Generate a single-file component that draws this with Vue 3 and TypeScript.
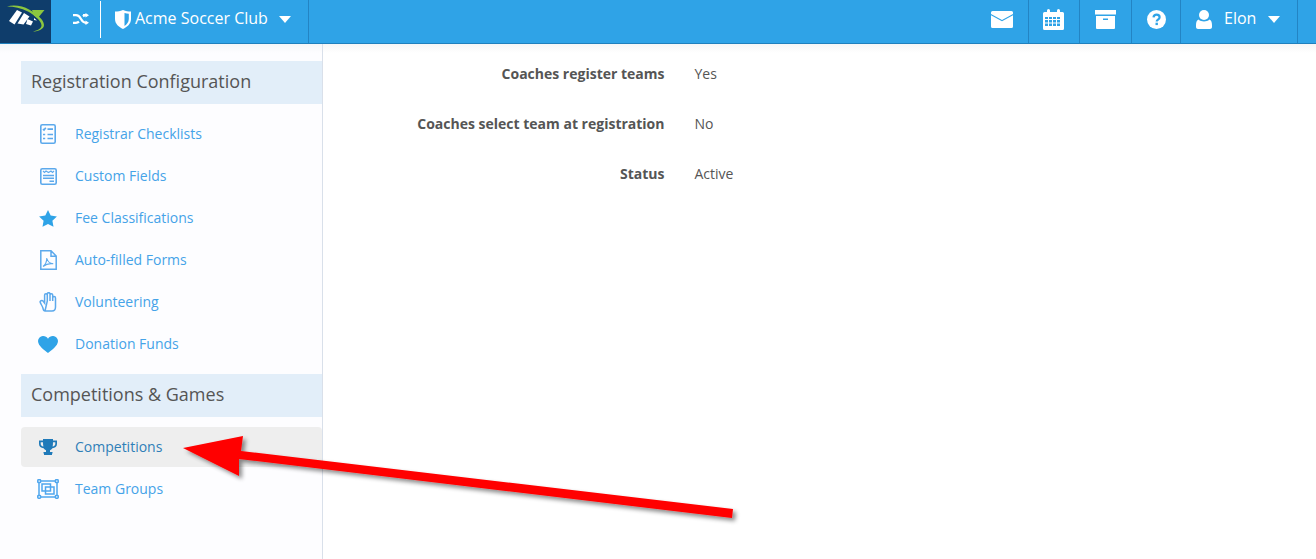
<script setup lang="ts">
interface Item { label: string; icon: string; active?: boolean }
const config: Item[] = [
  { label: 'Registrar Checklists', icon: 'check' },
  { label: 'Custom Fields', icon: 'fields' },
  { label: 'Fee Classifications', icon: 'star' },
  { label: 'Auto-filled Forms', icon: 'pdf' },
  { label: 'Volunteering', icon: 'hand' },
  { label: 'Donation Funds', icon: 'heart' },
]
const games: Item[] = [
  { label: 'Competitions', icon: 'trophy', active: true },
  { label: 'Team Groups', icon: 'groups' },
]
const details = [
  { k: 'Coaches register teams', v: 'Yes' },
  { k: 'Coaches select team at registration', v: 'No' },
  { k: 'Status', v: 'Active' },
]
</script>

<template>
  <div class="page">
    <header class="top">
      <div class="logo">
        <svg width="51" height="43" viewBox="0 0 51 43">
          <path d="M7 6.500C14 4.500 23 6 29 9.500C36 13.500 44 19.500 44 25C44 29 38.500 31.500 33 31.500C37.500 30.500 41.500 28.500 41.500 25.500C41.500 21 35 15.500 28 11.500C21 8 14 6.500 7 6.500Z" fill="#8cc63f" />
          <path d="M32 10H44.500L37.500 18.500L34 15.500Z" fill="#8cc63f" />
          <path d="M9 21L17 10L22 12.500L14.500 24.500Z" fill="#fff" />
          <path d="M17.500 23.500L24 13L29.500 16.500L23.500 24.500Z" fill="#fff" />
          <path d="M27.500 19L33 21.500L31 25.500L26 24Z" fill="#fff" />
          <path d="M34 18L37 20.500L34 20Z" fill="#fff" />
        </svg>
      </div>
      <div class="shuffle">
        <svg width="16" height="12" viewBox="0 0 16 12">
          <path d="M0 2.200h3c2.800 0 3.900 1.800 5 3.800s2.200 3.800 5 3.800M0 9.800h3c1.300 0 2.200-.4 3-1.100M13 2.200c-1.300 0-2.200.4-3 1.100M10 2.200h3" fill="none" stroke="#fff" stroke-width="2.200" />
          <path d="M12.500 0 16 2.200 12.500 4.400ZM12.500 7.600 16 9.800 12.500 12Z" fill="#fff" />
        </svg>
      </div>
      <div class="club">
        <svg width="16" height="19" viewBox="0 0 16 19">
          <path d="M0 1.500C3 1.500 5 1 8 0C11 1 13 1.500 16 1.500V9C16 14 12 17 8 19C4 17 0 14 0 9Z" fill="#fff" />
          <path d="M9.500 3C11 3.400 12.400 3.600 13.800 3.700V9C13.800 12 11.800 14.500 9.500 16Z" fill="#2fa3e7" />
        </svg>
        <span class="club-name">Acme Soccer Club</span>
        <i class="caret"></i>
      </div>
      <div class="spacer"></div>
      <div class="tool mail">
        <svg width="22" height="17" viewBox="0 0 22 17">
          <path d="M1.500 0h19A1.500 1.500 0 0 1 22 1.500V3l-11 6L0 3V1.500A1.500 1.500 0 0 1 1.500 0Z" fill="#fff" />
          <path d="M0 4.200l11 6 11-6v11.300a1.500 1.500 0 0 1-1.500 1.500h-19A1.500 1.500 0 0 1 0 15.500Z" fill="#fff" />
        </svg>
      </div>
      <div class="tool cal">
        <svg width="21" height="21" viewBox="0 0 21 21">
          <path fill-rule="evenodd" fill="#fff" d="M1.500 3H4V1.500a1.500 1.500 0 0 1 3 0V3h7V1.500a1.500 1.500 0 0 1 3 0V3h2.500A1.500 1.500 0 0 1 21 4.500v15a1.500 1.500 0 0 1-1.500 1.500h-18A1.500 1.500 0 0 1 0 19.500v-15A1.500 1.500 0 0 1 1.500 3ZM2 8v2h3V8Zm4 0v2h3V8Zm4 0v2h3V8Zm4 0v2h3V8ZM2 11v2.500h3V11Zm4 0v2.500h3V11Zm4 0v2.500h3V11Zm4 0v2.500h3V11ZM2 14.500V17h3v-2.500Zm4 0V17h3v-2.500Zm4 0V17h3v-2.500Zm4 0V17h3v-2.500Z" />
        </svg>
      </div>
      <div class="tool box">
        <svg width="21" height="19" viewBox="0 0 21 19">
          <path fill-rule="evenodd" fill="#fff" d="M0 0h21v4.500H0ZM1 6h19v12a1 1 0 0 1-1 1H2a1 1 0 0 1-1-1Zm7 2.500v1.500h5V8.500Z" />
        </svg>
      </div>
      <div class="tool help">
        <svg width="19" height="19" viewBox="0 0 19 19">
          <circle cx="9.500" cy="9.500" r="9.500" fill="#fff" />
          <path d="M6.500 7.300C6.700 5.600 8 4.700 9.600 4.700c1.700 0 3 1 3 2.600 0 2.300-2.900 2.400-2.900 4.200" fill="none" stroke="#2fa3e7" stroke-width="2.200" />
          <rect x="8.500" y="12.700" width="2.400" height="2.400" fill="#2fa3e7" />
        </svg>
      </div>
      <div class="tool user">
        <svg width="16" height="19" viewBox="0 0 16 19">
          <circle cx="8" cy="5" r="5" fill="#fff" />
          <path d="M2.500 9.500C4 11 6 11.400 8 11.400s4-.4 5.500-1.900C15 10 16 12 16 15v2c0 1.200-.9 2-2 2H2c-1.100 0-2-.8-2-2v-2c0-3 1-5 2.500-5.500Z" fill="#fff" />
        </svg>
        <span class="user-name">Elon</span>
        <i class="caret"></i>
      </div>
      <div class="tail"></div>
    </header>

    <div class="body">
      <aside class="side">
        <h2 class="sect">Registration Configuration</h2>
        <ul class="list">
          <li v-for="it in config" :key="it.label" class="row">
            <span class="ico">
              <svg v-if="it.icon === 'check'" width="16" height="20" viewBox="0 0 16 20" fill="none" stroke="#5ca9ec" stroke-width="1.600">
                <rect x=".8" y=".8" width="14.400" height="18.400" rx="1.500" />
                <path d="M3 5l1 1 1.800-2.200M3 10.500h2.200M3 14.500h2.200M7.500 5.200h5.500M7.500 10.500h5.500M7.500 14.500h5.500" stroke-width="1.700" />
              </svg>
              <svg v-else-if="it.icon === 'fields'" width="17" height="17" viewBox="0 0 17 17" fill="none" stroke="#5ca9ec" stroke-width="1.600">
                <rect x=".8" y=".8" width="15.400" height="15.400" rx="1.500" />
                <path d="M3 3l1.500 1.500L6 3l2.500 1.500L11 3l1.500 1.500L14 3" stroke-width="1.100" />
                <path d="M3 7.500h11M3 10.300h11M9.500 13.200H14" stroke-width="1.500" />
              </svg>
              <svg v-else-if="it.icon === 'star'" width="18" height="17" viewBox="0 0 18 17">
                <path d="M9 0l2.700 5.600 6.200.8-4.500 4.300 1.100 6.100L9 13.900l-5.500 2.900 1.100-6.100L.1 6.400l6.200-.8Z" fill="#2fa3e7" />
              </svg>
              <svg v-else-if="it.icon === 'pdf'" width="17" height="20" viewBox="0 0 17 20" fill="none" stroke="#5ca9ec" stroke-width="1.500">
                <path d="M.8.800h10.200l5.200 5.200v13.200H.8ZM11 .800v5.500h5.200" />
                <path d="M3 16.500c2.200-1.700 3.800-5.300 3.800-8.500.5 3.200 2.800 5.300 6.500 5.800-3.300-.5-7.600.5-10.300 2.700Z" stroke-width="1.100" />
              </svg>
              <svg v-else-if="it.icon === 'hand'" width="18" height="20" viewBox="0 0 18 20" fill="none" stroke="#5ca9ec" stroke-width="1.500">
                <path d="M6 19h7c2 0 3.500-1.500 3.500-4V6a1.300 1.300 0 0 0-2.800 0M13.700 9V3a1.300 1.300 0 0 0-2.700 0M11 9V2a1.300 1.300 0 0 0-2.700 0v7M8.300 9V3a1.300 1.300 0 0 0-2.700 0v8L4 9C3 8 .6 9 1.200 10.300c.7 2 2.300 4 2.800 6 .2 1 .8 2.700 2 2.700Z" />
              </svg>
              <svg v-else-if="it.icon === 'heart'" width="20" height="17" viewBox="0 0 20 17">
                <path d="M10 17C7 14.500 0 10 0 5a5 5 0 0 1 5.200-5C7.200 0 9 1 10 2.800 11 1 12.800 0 14.800 0A5 5 0 0 1 20 5c0 5-7 9.500-10 12Z" fill="#2fa3e7" />
              </svg>
            </span>
            <span class="lbl">{{ it.label }}</span>
          </li>
        </ul>
        <h2 class="sect">Competitions &amp; Games</h2>
        <ul class="list games">
          <li v-for="it in games" :key="it.label" class="row" :class="{ active: it.active }">
            <span class="ico">
              <svg v-if="it.icon === 'trophy'" width="18" height="16" viewBox="0 0 18 16">
                <path fill-rule="evenodd" fill="#1f7ab9" d="M4 0h10v1.500h4V5c0 2.500-2 4-4.600 4.300-.7 1-1.500 1.600-2.400 2V13h2.500v1.500H13V16H5v-1.500h-.5V13H7v-1.700c-.9-.4-1.700-1-2.400-2C2 9 0 7.500 0 5V1.500h4ZM1.700 3.200V5c0 1.200.9 2.200 2.700 2.500-.3-1.100-.4-2.600-.4-4.300Zm14.600 0H14c0 1.700-.1 3.200-.4 4.300 1.800-.3 2.700-1.300 2.700-2.500Z" />
              </svg>
              <svg v-else width="22" height="20" viewBox="0 0 22 20" fill="none" stroke="#4fa6ee" stroke-width="1.500">
                <rect x="2" y="2" width="18" height="16" />
                <rect x="5" y="5" width="8.500" height="7" />
                <rect x="8.500" y="8" width="8.500" height="7" />
                <g fill="#fff"><rect x=".8" y=".8" width="2.800" height="2.800" rx=".7" /><rect x="18.400" y=".8" width="2.800" height="2.800" rx=".7" /><rect x=".8" y="16.400" width="2.800" height="2.800" rx=".7" /><rect x="18.400" y="16.400" width="2.800" height="2.800" rx=".7" /></g>
              </svg>
            </span>
            <span class="lbl">{{ it.label }}</span>
          </li>
        </ul>
      </aside>

      <main class="main">
        <dl class="facts">
          <div v-for="d in details" :key="d.k" class="fact">
            <dt>{{ d.k }}</dt>
            <dd>{{ d.v }}</dd>
          </div>
        </dl>
      </main>
    </div>

    <svg class="arrow" width="1316" height="559" viewBox="0 0 1316 559">
      <defs>
        <filter id="arrow-shadow" x="-5%" y="-20%" width="110%" height="140%">
          <feDropShadow dx="3" dy="3" stdDeviation="2" flood-color="#000" flood-opacity=".45" />
        </filter>
      </defs>
      <polygon points="183,448 243,436 241,451 733,509 732,518 239,459 239,476" fill="#ff0000" filter="url(#arrow-shadow)" />
    </svg>
  </div>
</template>

<style>
html, body { margin: 0; background: #fff; }
</style>

<style scoped>
.page {
  position: relative;
  width: 1316px;
  height: 559px;
  overflow: hidden;
  font-family: "Open Sans", "Noto Sans", sans-serif;
  color: #555;
}
.top {
  display: flex;
  align-items: stretch;
  height: 43px;
  background: #2fa3e7;
  border-bottom: 1px solid #1f80bd;
  color: #fff;
}
.logo {
  width: 51px;
  background: #0f3d6b;
  flex: none;
}
.logo svg { display: block; }
.shuffle {
  width: 50px;
  flex: none;
  display: flex;
  align-items: center;
  justify-content: center;
  padding: 0 1px 5px 11px;
  box-sizing: border-box;
  position: relative;
}
.shuffle::after {
  content: "";
  position: absolute;
  right: 0;
  top: 1px;
  height: 37px;
  width: 1px;
  background: #fff;
}
.club {
  display: flex;
  align-items: center;
  width: 208px;
  box-sizing: border-box;
  padding: 0 0 5px 14px;
  border-right: 1px solid #2384c4;
  font-size: 16px;
}
.club-name { margin: -2px 0 0 4px; }
.caret {
  width: 0;
  height: 0;
  border-left: 6.500px solid transparent;
  border-right: 6.500px solid transparent;
  border-top: 7px solid #fff;
  margin-left: 11px;
  margin-top: 1px;
}
.spacer { flex: 1; }
.tool {
  display: flex;
  align-items: center;
  justify-content: center;
  box-sizing: border-box;
  border-right: 1px solid #2384c4;
  padding-bottom: 5px;
  flex: none;
}
.mail { width: 53px; }
.cal { width: 51px; padding-right: 2px; }
.box { width: 52px; }
.help { width: 49px; }
.user { width: 117px; justify-content: flex-start; padding-left: 15px; font-size: 16px; }
.user-name { margin: -2px 0 0 12px; }
.user .caret { margin-left: 12px; }
.tail { width: 18px; flex: none; }

.body { display: flex; height: 515px; }
.side {
  width: 323px;
  box-sizing: border-box;
  flex: none;
  padding: 17px 0 0 21px;
  background: linear-gradient(#f5f6f8, #fdfdff 9px);
  border-right: 1px solid #d9e0ea;
}
.sect {
  margin: 0;
  height: 43px;
  line-height: 41px;
  padding-left: 10px;
  background: #e2eef9;
  font-size: 18px;
  font-weight: 400;
  color: #555;
}
.list {
  list-style: none;
  margin: 0;
  padding: 9px 0 9px;
}
.games { padding-top: 10px; }
.row {
  display: flex;
  align-items: center;
  height: 42px;
  font-size: 14px;
  color: #45a3e8;
}
.lbl { margin-top: -2px; }
.games .row.active {
  height: 40px;
  margin-bottom: 1px;
  background: #eeeeee;
  border-radius: 4px;
  color: #2f7fb8;
}
.ico {
  width: 54px;
  flex: none;
  display: flex;
  align-items: center;
  justify-content: center;
}
.main {
  flex: 1;
  padding-top: 4px;
  background: linear-gradient(#f6f6f6, #fff 9px);
}
.facts { margin: 0; }
.fact {
  display: flex;
  height: 50px;
  align-items: center;
  font-size: 14px;
}
.fact dt {
  width: 341.500px;
  text-align: right;
  font-weight: 700;
  color: #555;
}
.fact dd {
  margin: 0 0 0 30px;
  color: #555;
}
.arrow {
  position: absolute;
  left: 0;
  top: 0;
  pointer-events: none;
}
</style>
